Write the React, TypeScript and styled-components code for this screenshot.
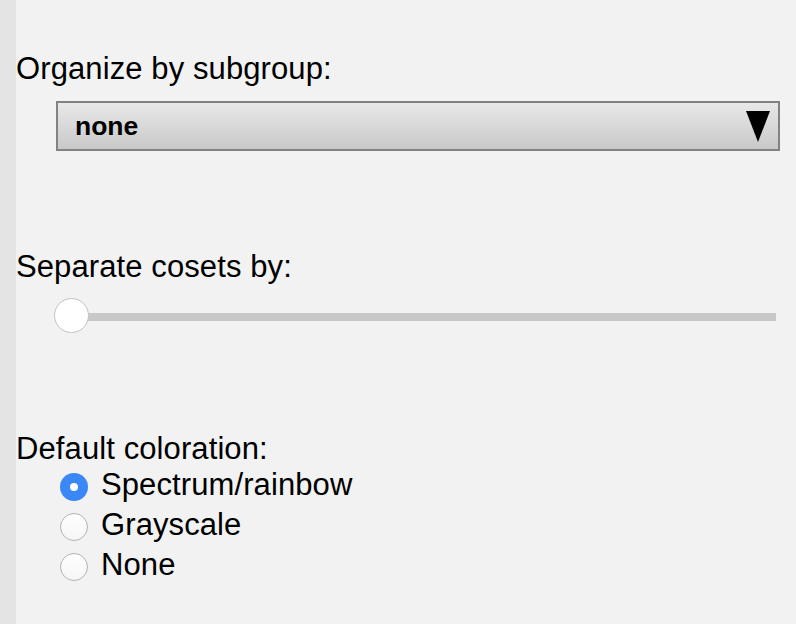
import React from "react";
import styled, { createGlobalStyle } from "styled-components";

const Global = createGlobalStyle`
  html, body { margin: 0; padding: 0; background: #f2f2f2; }
  body { font-family: "Liberation Sans", Arial, Helvetica, sans-serif; color: #000; }
`;

const Page = styled.div`
  display: flex;
  width: 796px;
  height: 624px;
  overflow: hidden;
  background: #f2f2f2;
`;

const Strip = styled.div`
  width: 16px;
  flex: none;
  background: #e4e4e4;
`;

const Panel = styled.div`
  flex: 1;
  display: flex;
  flex-direction: column;
  padding: 51px 16px 0 0;
`;

const Label = styled.div<{ $mt?: number }>`
  font-size: 31px;
  line-height: 36px;
  letter-spacing: 0.1px;
  margin-top: ${(p) => p.$mt ?? 0}px;
  white-space: nowrap;
`;

const Select = styled.div`
  box-sizing: border-box;
  margin: 14px 0 0 40px;
  height: 50px;
  border: 2px solid #828282;
  background: linear-gradient(to bottom, #e8e8e8 0%, #c9c9c9 100%);
  display: flex;
  align-items: center;
  justify-content: space-between;
  padding: 0 8px 0 17px;
`;

const SelectText = styled.span`
  font-weight: bold;
  font-size: 26.5px;
  line-height: 30px;
`;

const Arrow = styled.svg`
  width: 24px;
  height: 32px;
  margin-top: 2px;
`;

const Slider = styled.div`
  position: relative;
  margin: 13px 0 0 40px;
  height: 36px;
  width: 720px;
  display: flex;
  align-items: center;
`;

const Track = styled.div`
  width: 100%;
  height: 8px;
  margin-top: 2px;
  background: #c8c8c8;
`;

const Thumb = styled.div`
  position: absolute;
  left: -2px;
  top: 0;
  box-sizing: border-box;
  width: 35px;
  height: 35px;
  border-radius: 50%;
  background: #fff;
  border: 1.5px solid #c2c2c2;
`;

const RadioList = styled.div`
  display: flex;
  flex-direction: column;
  margin-top: -2px;
`;

const Row = styled.label`
  display: flex;
  align-items: center;
  height: 40px;
  padding-left: 44px;
  font-size: 31px;
  line-height: 40px;
  letter-spacing: 0.1px;
  white-space: nowrap;
`;

const Circle = styled.span<{ $on?: boolean }>`
  box-sizing: border-box;
  width: 28px;
  height: 28px;
  border-radius: 50%;
  margin-right: 13px;
  margin-top: 4px;
  flex: none;
  display: flex;
  align-items: center;
  justify-content: center;
  background: ${(p) => (p.$on ? "#3b87f6" : "linear-gradient(#ffffff, #f6f6f6)")};
  border: ${(p) => (p.$on ? "none" : "1.5px solid #b2b2b2")};
`;

const Dot = styled.span`
  width: 8px;
  height: 8px;
  border-radius: 50%;
  background: #fff;
`;

const options = [
  { label: "Spectrum/rainbow", on: true },
  { label: "Grayscale", on: false },
  { label: "None", on: false },
];

export default function App() {
  return (
    <>
      <Global />
      <Page>
        <Strip />
        <Panel>
          <Label>Organize by subgroup:</Label>
          <Select>
            <SelectText>none</SelectText>
            <Arrow viewBox="0 0 24 32">
              <polygon points="0,0 24,0 12,31" fill="#000" />
            </Arrow>
          </Select>
          <Label $mt={98}>Separate cosets by:</Label>
          <Slider>
            <Track />
            <Thumb />
          </Slider>
          <Label $mt={97}>Default coloration:</Label>
          <RadioList>
            {options.map((o) => (
              <Row key={o.label}>
                <Circle $on={o.on}>{o.on && <Dot />}</Circle>
                {o.label}
              </Row>
            ))}
          </RadioList>
        </Panel>
      </Page>
    </>
  );
}
